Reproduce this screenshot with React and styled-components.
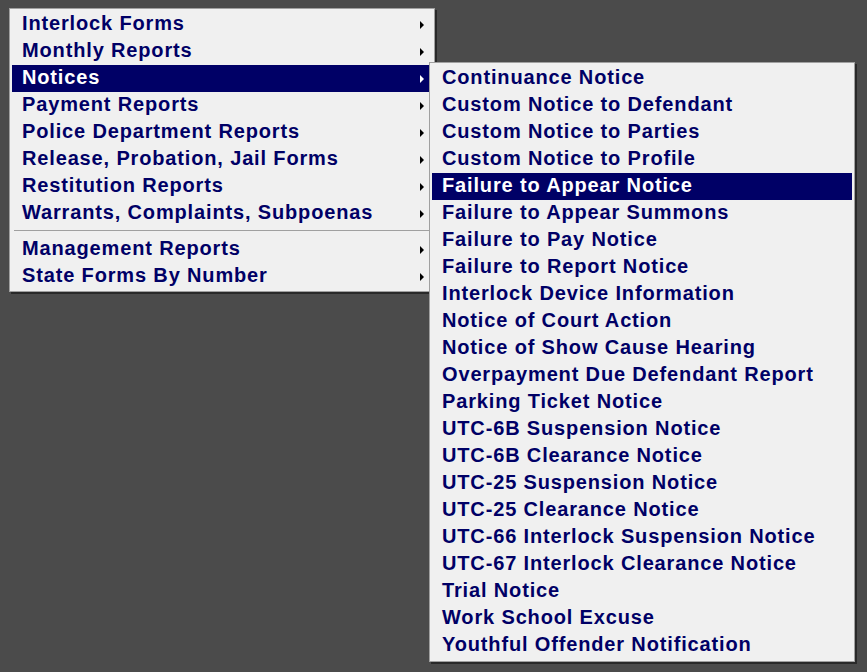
import styled, { createGlobalStyle } from "styled-components";

const GlobalStyle = createGlobalStyle`
  html, body {
    margin: 0;
    background: #4b4b4b;
    height: 100%;
  }
  body {
    font-family: "Liberation Sans", Arial, sans-serif;
  }
`;

const Page = styled.div`
  padding: 8px 0 0 9px;
  min-height: 672px;
  box-sizing: border-box;
`;

const MenuBox = styled.ul`
  list-style: none;
  margin: 0;
  width: 426px;
  box-sizing: border-box;
  padding: 2px 2px 1px 2px;
  background: #f0f0f0;
  border: 1px solid #a0a0a0;
  box-shadow: 2px 2px 0 rgba(0, 0, 0, 0.45);
  position: relative;
`;

const SubMenuBox = styled(MenuBox)`
  position: absolute;
  left: 417px;
  top: -3px;
  padding: 2px;
  z-index: 2;
`;

const Item = styled.li`
  position: relative;
  height: 27px;
  box-sizing: border-box;
  display: flex;
  align-items: center;
  padding: 0 8px 2px 10px;
  font-size: 20px;
  letter-spacing: 0.85px;
  font-weight: bold;
  color: ${(p) => (p.$active ? "#ffffff" : "#000066")};
  background: ${(p) => (p.$active ? "#000066" : "transparent")};
  white-space: nowrap;
`;

const Label = styled.span`
  flex: 1;
`;

const Arrow = styled.span`
  width: 0;
  height: 0;
  margin-top: 2px;
  border-top: 4px solid transparent;
  border-bottom: 4px solid transparent;
  border-left: 4px solid ${(p) => (p.$active ? "#ffffff" : "#000000")};
`;

const Separator = styled.li`
  height: 9px;
  box-sizing: border-box;
  padding: 3px 2px 0;
  &::before {
    content: "";
    display: block;
    height: 1px;
    background: #a0a0a0;
  }
`;

const mainGroups = [
  [
    "Interlock Forms",
    "Monthly Reports",
    "Notices",
    "Payment Reports",
    "Police Department Reports",
    "Release, Probation, Jail Forms",
    "Restitution Reports",
    "Warrants, Complaints, Subpoenas",
  ],
  ["Management Reports", "State Forms By Number"],
];

const notices = [
  "Continuance Notice",
  "Custom Notice to Defendant",
  "Custom Notice to Parties",
  "Custom Notice to Profile",
  "Failure to Appear Notice",
  "Failure to Appear Summons",
  "Failure to Pay Notice",
  "Failure to Report Notice",
  "Interlock Device Information",
  "Notice of Court Action",
  "Notice of Show Cause Hearing",
  "Overpayment Due Defendant Report",
  "Parking Ticket Notice",
  "UTC-6B Suspension Notice",
  "UTC-6B Clearance Notice",
  "UTC-25 Suspension Notice",
  "UTC-25 Clearance Notice",
  "UTC-66 Interlock Suspension Notice",
  "UTC-67 Interlock Clearance Notice",
  "Trial Notice",
  "Work School Excuse",
  "Youthful Offender Notification",
];

function SubMenu() {
  return (
    <SubMenuBox>
      {notices.map((n) => (
        <Item key={n} $active={n === "Failure to Appear Notice"}>
          <Label>{n}</Label>
        </Item>
      ))}
    </SubMenuBox>
  );
}

export default function App() {
  return (
    <>
      <GlobalStyle />
      <Page>
        <MenuBox>
          {mainGroups.map((group, gi) => [
            gi > 0 && <Separator key={"sep" + gi} />,
            ...group.map((name) => (
              <Item key={name} $active={name === "Notices"}>
                <Label>{name}</Label>
                <Arrow $active={name === "Notices"} />
                {name === "Notices" && <SubMenu />}
              </Item>
            )),
          ])}
        </MenuBox>
      </Page>
    </>
  );
}
